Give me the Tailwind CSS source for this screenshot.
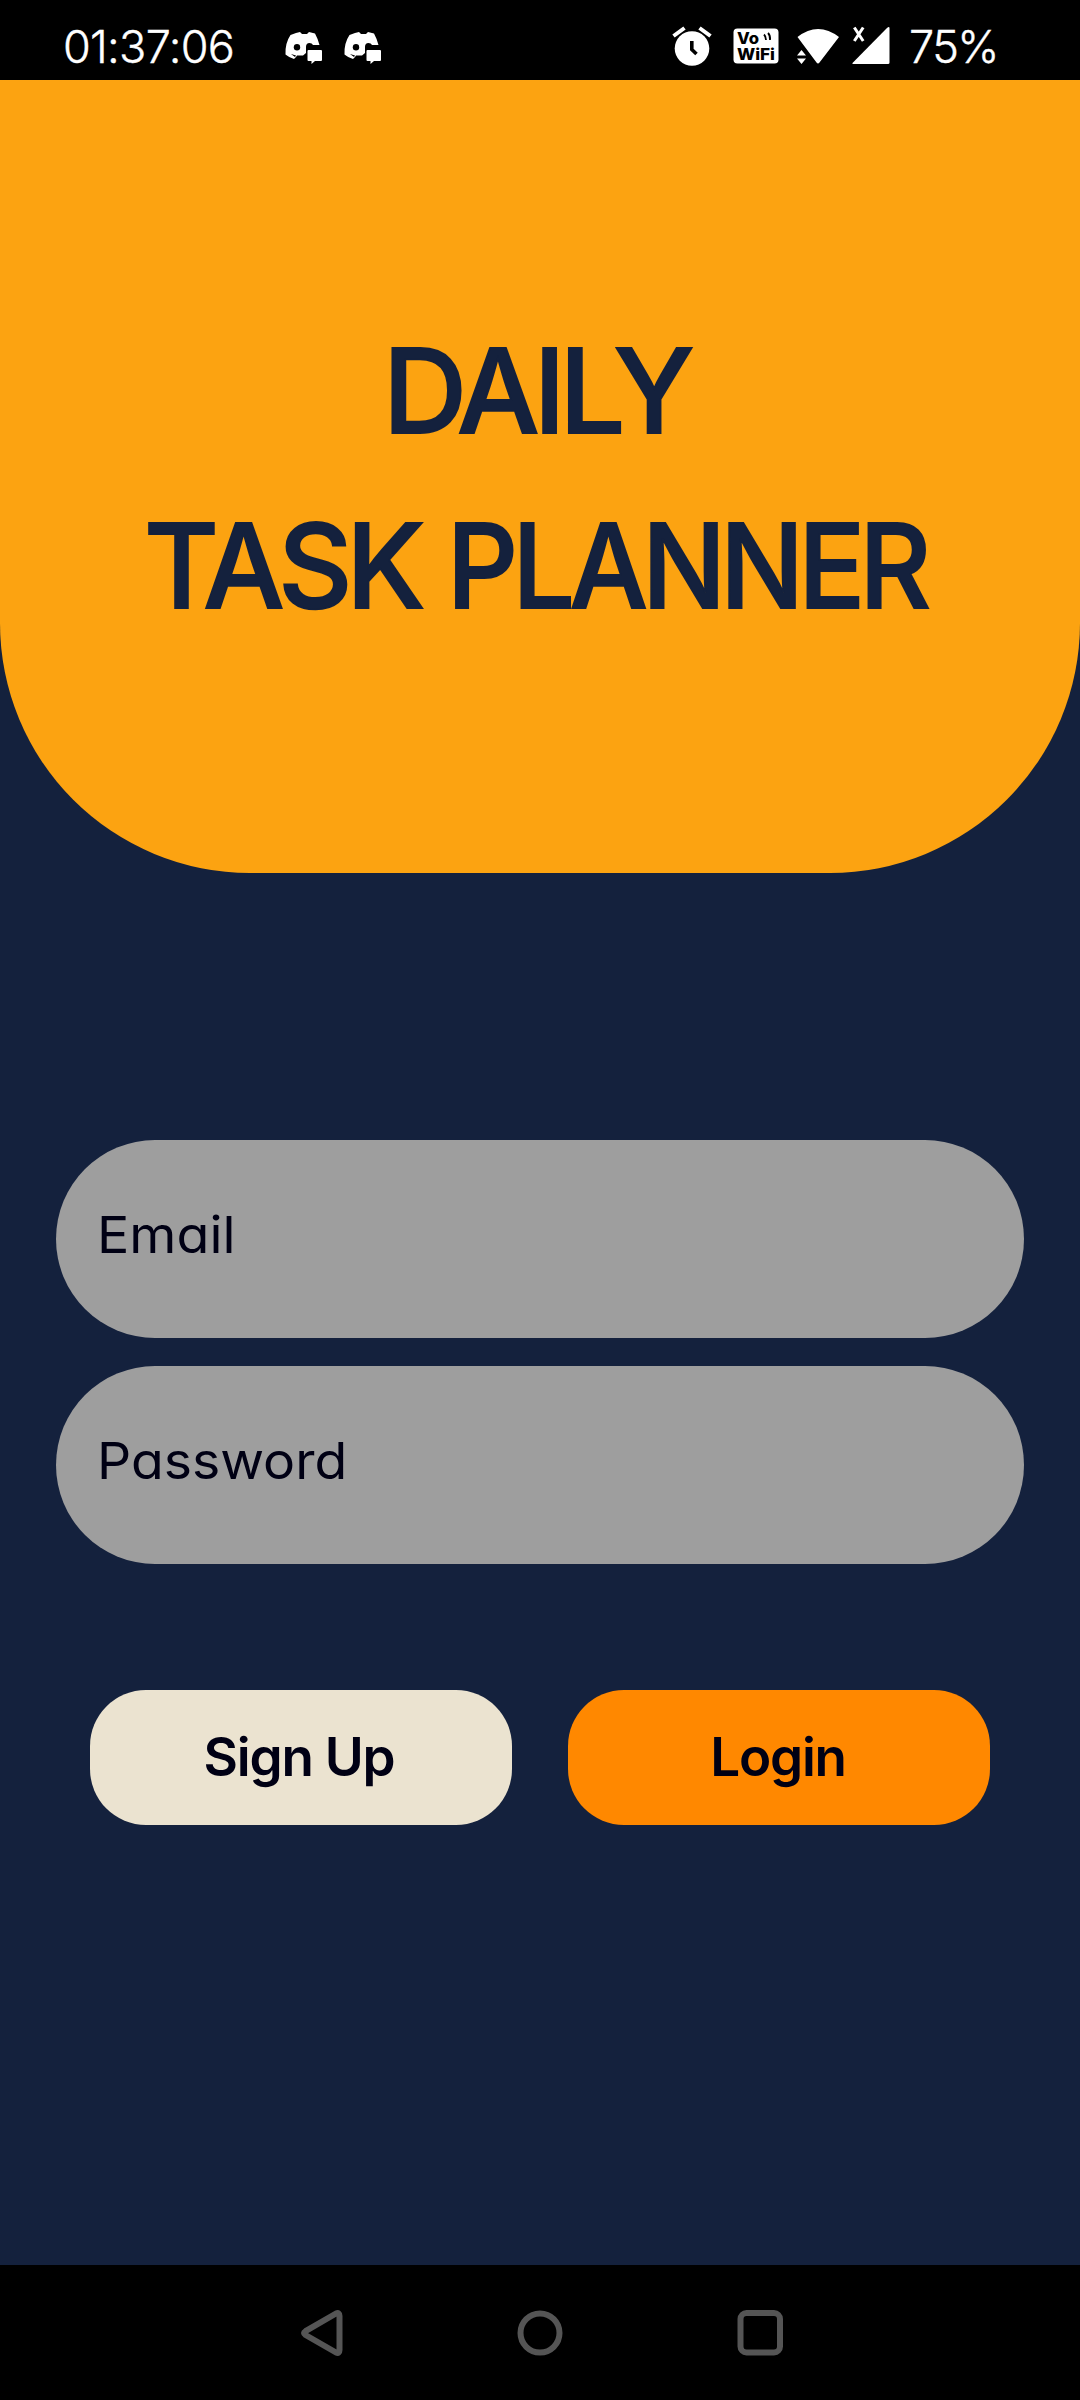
<!DOCTYPE html>
<html lang="en">
<head>
<meta charset="utf-8">
<title>Daily Task Planner</title>
<script src="https://cdn.jsdelivr.net/npm/@tailwindcss/browser@4"></script>
</head>
<body class="flex h-[2400px] w-[1080px] flex-col overflow-hidden bg-[#14213d] font-['Inter',sans-serif] text-[#000014]">
  <!-- Status bar -->
  <header class="flex h-20 shrink-0 bg-black text-white">
    <div class="w-[285px] pl-[63px] pt-[19px] text-[45px] leading-[56px] font-light tracking-[-0.7px] whitespace-nowrap [-webkit-text-stroke:0.4px]">01:37:06</div>
    <svg class="h-20 w-[96px] shrink-0" viewBox="0 0 96 80" fill="#fff">
      <defs>
        <g id="chat">
          <path d="M11 33 15 32 17 34H22L24 32 30 33.500Q33 39 34.500 45H28Q27 43 24.500 43Q21 43 21 47V53L18 55.500H12L11 57 9 59Q4 57.500 0.500 54.500Q0 43 5.500 35Z"/>
          <circle cx="12" cy="47.300" r="3.200" fill="#000"/>
          <path d="M6 54 11 55.500 10 57Z" fill="#000"/>
          <path d="M23.500 50H36Q37 50 37 51V60Q37 61 36 61H30L26.500 64V61H23.500Q22.500 61 22.500 60V51Q22.500 50 23.500 50Z"/>
        </g>
      </defs>
      <use href="#chat"/>
      <use href="#chat" x="59"/>
    </svg>
    <div class="flex-1"></div>
    <svg class="h-20 w-[226px] shrink-0" viewBox="670 0 226 80" fill="#fff">
      <circle cx="692" cy="48.500" r="17.300"/>
      <path d="M673.500 36 684.500 28M710.500 36 699.500 28" stroke="#fff" stroke-width="4" fill="none"/>
      <path d="M691.800 41V49.500L696.500 54" stroke="#000" stroke-width="3.600" fill="none"/>
      <rect x="733.500" y="28.500" width="45" height="35" rx="4"/>
      <text x="737" y="43.800" font-size="16" font-weight="800" textLength="22" lengthAdjust="spacingAndGlyphs" fill="#000">Vo</text>
      <text x="737" y="60.200" font-size="16" font-weight="800" textLength="38" lengthAdjust="spacingAndGlyphs" fill="#000">WiFi</text>
      <path d="M764 34.500Q766 36.500 766 40M768 33Q770.500 35.500 770 40" stroke="#000" stroke-width="1.800" fill="none"/>
      <path d="M797.500 37Q818 21 839 37L819.500 62.500Q818 64.500 816.500 62.500Z"/>
      <path d="M797 55.500 801.500 50 806 55.500ZM797 58.500H806L801.500 64Z"/>
      <path d="M889.500 28.500V62.500Q889.500 64 888 64H853Q852 64 852.500 63L887 28Q889.500 26 889.500 28.500Z"/>
      <path d="M854.300 27.500 863.200 41M863.200 27.500 854.300 41" stroke="#fff" stroke-width="3"/>
    </svg>
    <div class="w-[184px] pl-[13px] pt-[19px] text-[45px] leading-[56px] font-light tracking-[-0.035em] [-webkit-text-stroke:0.4px]">75%</div>
  </header>

  <!-- Title panel -->
  <section class="h-[793px] shrink-0 rounded-b-[250px] bg-[#fca311] pt-[223px] text-[117px] leading-[175px] font-medium tracking-[-0.05em] whitespace-nowrap text-[#14213d] [-webkit-text-stroke:1.8px]">
    <h1 class="flex pl-[383px]"><span class="origin-left scale-x-[0.995]">DAILY</span></h1>
    <h1 class="flex pl-[144px]">
      <span class="w-[303px] origin-left scale-x-[0.98]">TASK</span>
      <span class="origin-left scale-x-[0.945]">PLANNER</span>
    </h1>
  </section>

  <!-- Credentials -->
  <main class="flex flex-1 flex-col px-14 pt-[267px]">
    <div class="flex h-[198px] items-center rounded-full bg-[#9e9e9e] pb-[7px] pl-[41px] text-[51px] [font-feature-settings:'cv11']"><span class="origin-left scale-x-[1.055]">Email</span></div>
    <div class="mt-7 flex h-[198px] items-center rounded-full bg-[#9e9e9e] pb-[7px] pl-[41px] text-[51px] [font-feature-settings:'cv11']"><span class="origin-left scale-x-[1.05]">Password</span></div>
    <div class="mt-[126px] flex gap-14 px-[34px] text-[53px] font-semibold tracking-[-1.2px]">
      <button class="h-[135px] w-[422px] rounded-[56px] bg-[#ebe3d0] pr-1"><span>Sign Up</span></button>
      <button class="h-[135px] w-[422px] rounded-[56px] bg-[#ff8800] pr-0.5"><span>Login</span></button>
    </div>
  </main>

  <!-- System navigation -->
  <nav class="flex h-[135px] shrink-0 bg-black">
    <svg class="h-full w-full" viewBox="0 2265 1080 135" fill="none" stroke="#555" stroke-width="6" stroke-linejoin="round">
      <path d="M305.500 2331.200 336 2313.500Q339.500 2312 339.500 2316V2350Q339.500 2354 336 2352.500L305.500 2335Q302.500 2333 305.500 2331.200Z"/>
      <circle cx="540" cy="2333" r="19.500"/>
      <rect x="740.500" y="2313" width="39.500" height="39.500" rx="6"/>
    </svg>
  </nav>
</body>
</html>
